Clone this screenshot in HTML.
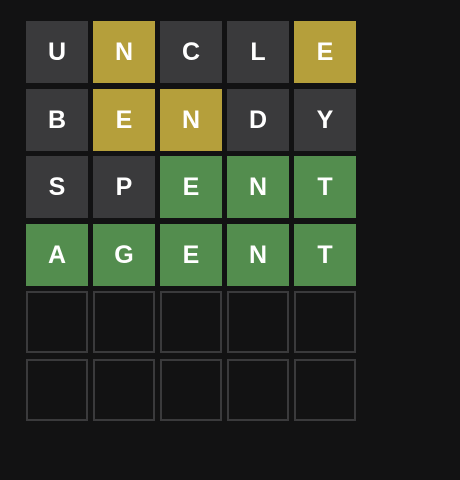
<!DOCTYPE html><html><head><style>
body{margin:0;width:460px;height:480px;background:#121213;position:relative;overflow:hidden;font-family:"Liberation Sans",Arial,sans-serif}
.t{position:absolute;width:62px;height:62px;box-sizing:border-box;color:#fff;font-weight:bold;font-size:25px;display:flex;align-items:center;justify-content:center}
.d{background:#3a3a3c}.y{background:#b59f3b}.g{background:#538d4e}.e{border:2px solid #3a3a3c}
</style></head><body>
<script>
const rows=[["UNCLE","dyddy"],["BENDY","dyydd"],["SPENT","ddggg"],["AGENT","ggggg"],["     ","eeeee"],["     ","eeeee"]];
const tops=[21,89,156,224,291,359];
let h='';
rows.forEach((r,i)=>{for(let j=0;j<5;j++){h+=`<div class="t ${r[1][j]}" style="left:${26+67*j}px;top:${tops[i]}px">${r[0][j].trim()}</div>`}});
document.write(h);
</script>
</body></html>
